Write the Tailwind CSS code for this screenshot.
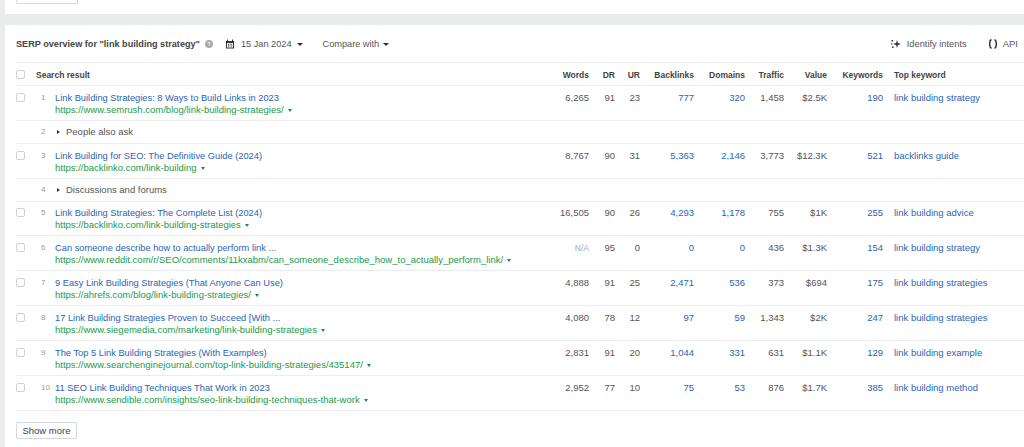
<!DOCTYPE html>
<html><head><meta charset="utf-8"><script src="https://cdn.jsdelivr.net/npm/@tailwindcss/browser@4"></script></head>
<body class="m-0 h-[447px] w-[1024px] overflow-hidden bg-[#eaebed] font-['Liberation_Sans',sans-serif] text-[9.5px] leading-[12px] text-[#555]">
<div class="ml-[5px] flex h-[14px] items-start bg-white pl-[11px]"><div class="h-[4px] w-[62px] rounded-b-[2px] border border-t-0 border-[#d5d7da]"></div></div>
<section class="ml-[5px] mt-[11px] h-[422px] bg-white pl-[11px]">
<div class="flex h-[38px] items-center border-b border-[#ececee] pt-[1px]">
<h2 class="text-[9.150px] font-bold text-[#444]">SERP overview for "link building strategy"</h2>
<svg class="ml-[5px] h-[8px] w-[8px]" viewBox="0 0 8 8"><circle cx="4" cy="4" r="4" fill="#aaa"/><text x="4" y="6.3" text-anchor="middle" font-size="6" fill="#fff" font-family="Liberation Sans">?</text></svg>
<svg class="ml-[12px] h-[10px] w-[10px]" viewBox="0 0 10 10"><path d="M1 2h8v7.500H1z" fill="#333"/><path d="M2.500.5v2M7.500.5v2" stroke="#333"/><path d="M2 4h6v4.500H2z" fill="#fff"/><path d="M3 4.800h1v1H3zM4.600 4.800h1v1h-1zM6.200 4.800h1v1h-1zM3 6.500h1v1H3zM4.600 6.500h1v1h-1zM6.200 6.500h1v1h-1z" fill="#333"/></svg>
<span class="ml-[6px] text-[9.200px]">15 Jan 2024</span><i class="ml-[5px] h-0 w-0 border-x-[3px] border-t-[3px] border-x-transparent border-t-[#333]"></i>
<span class="ml-[20px] text-[9.200px]">Compare with</span><i class="ml-[4px] h-0 w-0 border-x-[3px] border-t-[3px] border-x-transparent border-t-[#333]"></i>
<div class="ml-auto flex items-center pr-[6px]">
<svg class="h-[10px] w-[10px]" viewBox="0 0 10 10" fill="#333"><path d="M6 1l.9 3.100L10 5l-3.100.9L6 9l-.9-3.100L2 5l3.100-.9z"/><path d="M.5 1h1.500v1.500H.5zM0 4.200h1.200v1.200H0zM1 7.500h1.500V9H1z"/></svg>
<span class="ml-[6px] text-[9.300px]">Identify intents</span>
<svg class="ml-[21px] h-[10px] w-[10px]" viewBox="0 0 10 10" fill="none" stroke="#222" stroke-width="1.400"><path d="M3.500 1H3C2 1 2 1.800 2 3S1.800 5 1 5c.8 0 1 .8 1 2s0 2 1 2h.5M6.500 1H7c1 0 1 .8 1 2s.2 2 1 2c-.8 0-1 .8-1 2s0 2-1 2h-.5"/></svg>
<span class="ml-[5px]">API</span></div>
</div>
<div class="grid h-[23px] grid-cols-[25px_14px_499px_35px_26px_25px_54px_51px_39px_43px_56px_1fr] items-center border-b border-[#ececee] pt-[1px] text-right text-[8.500px] font-bold text-[#444]">
<i class="h-[9px] w-[9px] rounded-[2px] border border-[#cfd1d5]"></i><span class="col-span-2 -ml-[5px] text-left">Search result</span><span>Words</span><span>DR</span><span>UR</span><span>Backlinks</span><span>Domains</span><span>Traffic</span><span>Value</span><span>Keywords</span><span class="pl-[11px] text-left">Top keyword</span>
</div>

<div class="grid h-[35px] grid-cols-[25px_14px_499px_35px_26px_25px_54px_51px_39px_43px_56px_1fr] border-b border-[#ececee] pt-[6px] text-right">
<i class="mt-[1px] h-[9px] w-[9px] rounded-[2px] border border-[#cfd1d5]"></i><span class="text-left text-[8px] text-[#999]">1</span><div class="text-left"><a class="block text-[9.300px] text-[#2a64b4]">Link Building Strategies: 8 Ways to Build Links in 2023</a><a class="block text-[#1b9a4b]">https://www.semrush.com/blog/link-building-strategies/<i class="ml-[4px] inline-block h-0 w-0 border-x-[2.500px] border-t-[3px] border-x-transparent border-t-[#1b8a44] align-middle"></i></a></div><span>6,265</span><span>91</span><span>23</span><span class="text-[#2a64b4]">777</span><span class="text-[#2a64b4]">320</span><span>1,458</span><span>$2.5K</span><span class="text-[#2a64b4]">190</span><span class="pl-[11px] text-left text-[#2a64b4]">link building strategy</span>
</div>
<div class="grid h-[23px] grid-cols-[25px_14px_1fr] items-center border-b border-[#ececee]"><i></i><span class="text-[8px] text-[#999]">2</span><div class="flex items-center pl-[2px]"><i class="h-0 w-0 border-y-[2.500px] border-l-[3px] border-y-transparent border-l-[#333]"></i><span class="ml-[6px]">People also ask</span></div></div>

<div class="grid h-[35px] grid-cols-[25px_14px_499px_35px_26px_25px_54px_51px_39px_43px_56px_1fr] border-b border-[#ececee] pt-[6px] text-right">
<i class="mt-[1px] h-[9px] w-[9px] rounded-[2px] border border-[#cfd1d5]"></i><span class="text-left text-[8px] text-[#999]">3</span><div class="text-left"><a class="block text-[9.300px] text-[#2a64b4]">Link Building for SEO: The Definitive Guide (2024)</a><a class="block text-[#1b9a4b]">https://backlinko.com/link-building<i class="ml-[4px] inline-block h-0 w-0 border-x-[2.500px] border-t-[3px] border-x-transparent border-t-[#1b8a44] align-middle"></i></a></div><span>8,767</span><span>90</span><span>31</span><span class="text-[#2a64b4]">5,363</span><span class="text-[#2a64b4]">2,146</span><span>3,773</span><span>$12.3K</span><span class="text-[#2a64b4]">521</span><span class="pl-[11px] text-left text-[#2a64b4]">backlinks guide</span>
</div>
<div class="grid h-[23px] grid-cols-[25px_14px_1fr] items-center border-b border-[#ececee]"><i></i><span class="text-[8px] text-[#999]">4</span><div class="flex items-center pl-[2px]"><i class="h-0 w-0 border-y-[2.500px] border-l-[3px] border-y-transparent border-l-[#333]"></i><span class="ml-[6px]">Discussions and forums</span></div></div>

<div class="grid h-[34px] grid-cols-[25px_14px_499px_35px_26px_25px_54px_51px_39px_43px_56px_1fr] border-b border-[#ececee] pt-[5px] text-right">
<i class="mt-[1px] h-[9px] w-[9px] rounded-[2px] border border-[#cfd1d5]"></i><span class="text-left text-[8px] text-[#999]">5</span><div class="text-left"><a class="block text-[9.300px] text-[#2a64b4]">Link Building Strategies: The Complete List (2024)</a><a class="block text-[#1b9a4b]">https://backlinko.com/link-building-strategies<i class="ml-[4px] inline-block h-0 w-0 border-x-[2.500px] border-t-[3px] border-x-transparent border-t-[#1b8a44] align-middle"></i></a></div><span>16,505</span><span>90</span><span>26</span><span class="text-[#2a64b4]">4,293</span><span class="text-[#2a64b4]">1,178</span><span>755</span><span>$1K</span><span class="text-[#2a64b4]">255</span><span class="pl-[11px] text-left text-[#2a64b4]">link building advice</span>
</div>
<div class="grid h-[35px] grid-cols-[25px_14px_499px_35px_26px_25px_54px_51px_39px_43px_56px_1fr] border-b border-[#ececee] pt-[6px] text-right">
<i class="mt-[1px] h-[9px] w-[9px] rounded-[2px] border border-[#cfd1d5]"></i><span class="text-left text-[8px] text-[#999]">6</span><div class="text-left"><a class="block text-[9.300px] text-[#2a64b4]">Can someone describe how to actually perform link ...</a><a class="block text-[#1b9a4b]">https://www.reddit.com/r/SEO/comments/11kxabm/can_someone_describe_how_to_actually_perform_link/<i class="ml-[4px] inline-block h-0 w-0 border-x-[2.500px] border-t-[3px] border-x-transparent border-t-[#1b8a44] align-middle"></i></a></div><span class="text-[8.500px] text-[#aaa]">N/A</span><span>95</span><span>0</span><span class="text-[#2a64b4]">0</span><span class="text-[#2a64b4]">0</span><span>436</span><span>$1.3K</span><span class="text-[#2a64b4]">154</span><span class="pl-[11px] text-left text-[#2a64b4]">link building strategy</span>
</div>
<div class="grid h-[35px] grid-cols-[25px_14px_499px_35px_26px_25px_54px_51px_39px_43px_56px_1fr] border-b border-[#ececee] pt-[6px] text-right">
<i class="mt-[1px] h-[9px] w-[9px] rounded-[2px] border border-[#cfd1d5]"></i><span class="text-left text-[8px] text-[#999]">7</span><div class="text-left"><a class="block text-[9.300px] text-[#2a64b4]">9 Easy Link Building Strategies (That Anyone Can Use)</a><a class="block text-[#1b9a4b]">https://ahrefs.com/blog/link-building-strategies/<i class="ml-[4px] inline-block h-0 w-0 border-x-[2.500px] border-t-[3px] border-x-transparent border-t-[#1b8a44] align-middle"></i></a></div><span>4,888</span><span>91</span><span>25</span><span class="text-[#2a64b4]">2,471</span><span class="text-[#2a64b4]">536</span><span>373</span><span>$694</span><span class="text-[#2a64b4]">175</span><span class="pl-[11px] text-left text-[#2a64b4]">link building strategies</span>
</div>
<div class="grid h-[35px] grid-cols-[25px_14px_499px_35px_26px_25px_54px_51px_39px_43px_56px_1fr] border-b border-[#ececee] pt-[6px] text-right">
<i class="mt-[1px] h-[9px] w-[9px] rounded-[2px] border border-[#cfd1d5]"></i><span class="text-left text-[8px] text-[#999]">8</span><div class="text-left"><a class="block text-[9.300px] text-[#2a64b4]">17 Link Building Strategies Proven to Succeed [With ...</a><a class="block text-[#1b9a4b]">https://www.siegemedia.com/marketing/link-building-strategies<i class="ml-[4px] inline-block h-0 w-0 border-x-[2.500px] border-t-[3px] border-x-transparent border-t-[#1b8a44] align-middle"></i></a></div><span>4,080</span><span>78</span><span>12</span><span class="text-[#2a64b4]">97</span><span class="text-[#2a64b4]">59</span><span>1,343</span><span>$2K</span><span class="text-[#2a64b4]">247</span><span class="pl-[11px] text-left text-[#2a64b4]">link building strategies</span>
</div>
<div class="grid h-[35px] grid-cols-[25px_14px_499px_35px_26px_25px_54px_51px_39px_43px_56px_1fr] border-b border-[#ececee] pt-[6px] text-right">
<i class="mt-[1px] h-[9px] w-[9px] rounded-[2px] border border-[#cfd1d5]"></i><span class="text-left text-[8px] text-[#999]">9</span><div class="text-left"><a class="block text-[9.300px] text-[#2a64b4]">The Top 5 Link Building Strategies (With Examples)</a><a class="block text-[#1b9a4b]">https://www.searchenginejournal.com/top-link-building-strategies/435147/<i class="ml-[4px] inline-block h-0 w-0 border-x-[2.500px] border-t-[3px] border-x-transparent border-t-[#1b8a44] align-middle"></i></a></div><span>2,831</span><span>91</span><span>20</span><span class="text-[#2a64b4]">1,044</span><span class="text-[#2a64b4]">331</span><span>631</span><span>$1.1K</span><span class="text-[#2a64b4]">129</span><span class="pl-[11px] text-left text-[#2a64b4]">link building example</span>
</div>
<div class="grid h-[35px] grid-cols-[25px_14px_499px_35px_26px_25px_54px_51px_39px_43px_56px_1fr] border-b border-[#ececee] pt-[6px] text-right">
<i class="mt-[1px] h-[9px] w-[9px] rounded-[2px] border border-[#cfd1d5]"></i><span class="text-left text-[8px] text-[#999]">10</span><div class="text-left"><a class="block text-[9.300px] text-[#2a64b4]">11 SEO Link Building Techniques That Work in 2023</a><a class="block text-[#1b9a4b]">https://www.sendible.com/insights/seo-link-building-techniques-that-work<i class="ml-[4px] inline-block h-0 w-0 border-x-[2.500px] border-t-[3px] border-x-transparent border-t-[#1b8a44] align-middle"></i></a></div><span>2,952</span><span>77</span><span>10</span><span class="text-[#2a64b4]">75</span><span class="text-[#2a64b4]">53</span><span>876</span><span>$1.7K</span><span class="text-[#2a64b4]">385</span><span class="pl-[11px] text-left text-[#2a64b4]">link building method</span>
</div>
<button class="mt-[11px] h-[17px] w-[61px] rounded-[2px] border border-[#d5d7da] bg-white text-center text-[9.500px] text-[#444]">Show more</button>
</section>
</body></html>
